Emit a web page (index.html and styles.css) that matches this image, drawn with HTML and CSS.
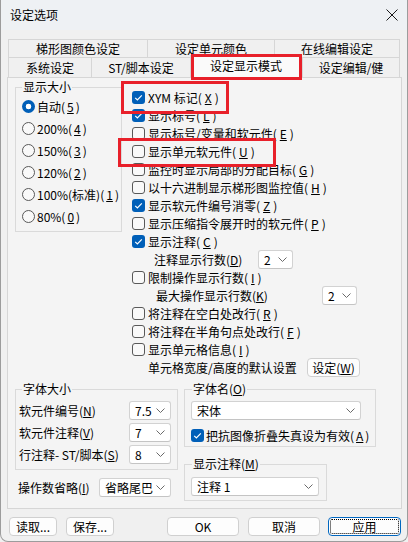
FILE: index.html
```html
<!DOCTYPE html>
<html lang="zh-CN">
<head>
<meta charset="utf-8">
<title>设定选项</title>
<link rel="stylesheet" href="styles.css">
</head>
<body>
<div class="win">
  <div class="titlebar">
    <span class="title">设定选项</span>
    <svg class="close" width="12" height="12" viewBox="0 0 12 12"><path d="M0.5 0.5 L11.5 11.5 M11.5 0.5 L0.5 11.5" stroke="#1a1a1a" stroke-width="1" fill="none"/></svg>
  </div>
  <div class="tabs">
    <div class="tabrow">
      <div class="tab t1">梯形图颜色设定</div>
      <div class="tab t2">设定单元颜色</div>
      <div class="tab t3 last">在线编辑设定</div>
    </div>
    <div class="tabrow front">
      <div class="tab t4">系统设定</div>
      <div class="tab t5">ST/脚本设定</div>
      <div class="tab t6 selected mark mark-tab">设定显示模式</div>
      <div class="tab t7 last">设定编辑/健</div>
    </div>
  </div>
  <div class="panel">
    <div class="top">
      <fieldset class="group size">
        <legend>显示大小</legend>
        <div class="radio on"><span class="rb"></span>自动(<u>5</u>)</div>
        <div class="radio"><span class="rb"></span>200%(<u>4</u>)</div>
        <div class="radio"><span class="rb"></span>150%(<u>3</u>)</div>
        <div class="radio"><span class="rb"></span>120%(<u>2</u>)</div>
        <div class="radio"><span class="rb"></span>100%(标准)(<u>1</u>)</div>
        <div class="radio"><span class="rb"></span>80%(<u>0</u>)</div>
      </fieldset>
      <div class="opts">
        <div class="row mark mark-xym"><span class="cb on"><svg width="13" height="13" viewBox="0 0 13 13"><path d="M3.2 6.8 L5.4 9 L9.8 4.4" fill="none" stroke="#fff" stroke-width="1.2"/></svg></span>XYM 标记(<u>X</u>)</div>
        <div class="row"><span class="cb on"><svg width="13" height="13" viewBox="0 0 13 13"><path d="M3.2 6.8 L5.4 9 L9.8 4.4" fill="none" stroke="#fff" stroke-width="1.2"/></svg></span>显示标号(<u>L</u>)</div>
        <div class="row"><span class="cb"></span>显示标号/变量和软元件(<u>E</u>)</div>
        <div class="row mark mark-unit"><span class="cb"></span>显示单元软元件(<u>U</u>)</div>
        <div class="row"><span class="cb"></span>监控时显示局部的分配目标(<u>G</u>)</div>
        <div class="row"><span class="cb"></span>以十六进制显示梯形图监控值(<u>H</u>)</div>
        <div class="row"><span class="cb on"><svg width="13" height="13" viewBox="0 0 13 13"><path d="M3.2 6.8 L5.4 9 L9.8 4.4" fill="none" stroke="#fff" stroke-width="1.2"/></svg></span>显示软元件编号消零(<u>Z</u>)</div>
        <div class="row"><span class="cb"></span>显示压缩指令展开时的软元件(<u>P</u>)</div>
        <div class="row"><span class="cb on"><svg width="13" height="13" viewBox="0 0 13 13"><path d="M3.2 6.8 L5.4 9 L9.8 4.4" fill="none" stroke="#fff" stroke-width="1.2"/></svg></span>显示注释(<u>C</u>)</div>
        <div class="row ind1"><span class="lbl lbl-d">注释显示行数(<u>D</u>)</span><span class="dd dd-s"><span>2</span><svg width="9" height="5" viewBox="0 0 9 5"><path d="M0.5 0.5 L4.5 4.5 L8.5 0.5" fill="none" stroke="#6a6a6a"/></svg></span></div>
        <div class="row"><span class="cb"></span>限制操作显示行数(<u>I</u>)</div>
        <div class="row ind2"><span class="lbl lbl-k">最大操作显示行数(<u>K</u>)</span><span class="dd dd-s"><span>2</span><svg width="9" height="5" viewBox="0 0 9 5"><path d="M0.5 0.5 L4.5 4.5 L8.5 0.5" fill="none" stroke="#6a6a6a"/></svg></span></div>
        <div class="row"><span class="cb"></span>将注释在空白处改行(<u>R</u>)</div>
        <div class="row"><span class="cb"></span>将注释在半角句点处改行(<u>F</u>)</div>
        <div class="row"><span class="cb"></span>显示单元格信息(<u>I</u>)</div>
        <div class="row ind3"><span class="lbl lbl-w">单元格宽度/高度的默认设置</span><button class="btn btn-set">设定(<u>W</u>)</button></div>
      </div>
    </div>
    <div class="bottom">
      <div class="bleft">
        <fieldset class="group fsize">
          <legend>字体大小</legend>
          <div class="frow"><span>软元件编号(<u>N</u>)</span><span class="dd dd-f"><span>7.5</span><svg width="9" height="5" viewBox="0 0 9 5"><path d="M0.5 0.5 L4.5 4.5 L8.5 0.5" fill="none" stroke="#6a6a6a"/></svg></span></div>
          <div class="frow"><span>软元件注释(<u>V</u>)</span><span class="dd dd-f"><span>7</span><svg width="9" height="5" viewBox="0 0 9 5"><path d="M0.5 0.5 L4.5 4.5 L8.5 0.5" fill="none" stroke="#6a6a6a"/></svg></span></div>
          <div class="frow"><span>行注释- ST/脚本(<u>S</u>)</span><span class="dd dd-f"><span>8</span><svg width="9" height="5" viewBox="0 0 9 5"><path d="M0.5 0.5 L4.5 4.5 L8.5 0.5" fill="none" stroke="#6a6a6a"/></svg></span></div>
        </fieldset>
        <div class="oprow"><span>操作数省略(<u>I</u>)</span><span class="dd dd-op"><span>省略尾巴</span><svg width="9" height="5" viewBox="0 0 9 5"><path d="M0.5 0.5 L4.5 4.5 L8.5 0.5" fill="none" stroke="#6a6a6a"/></svg></span></div>
      </div>
      <div class="bright">
        <fieldset class="group fname">
          <legend>字体名(<u>O</u>)</legend>
          <span class="dd dd-fn"><span>宋体</span><svg width="9" height="5" viewBox="0 0 9 5"><path d="M0.5 0.5 L4.5 4.5 L8.5 0.5" fill="none" stroke="#6a6a6a"/></svg></span>
          <div class="row arow"><span class="cb on"><svg width="13" height="13" viewBox="0 0 13 13"><path d="M3.2 6.8 L5.4 9 L9.8 4.4" fill="none" stroke="#fff" stroke-width="1.2"/></svg></span>把抗图像折叠失真设为有效(<u>A</u>)</div>
        </fieldset>
        <fieldset class="group fcom">
          <legend>显示注释(<u>M</u>)</legend>
          <span class="dd dd-cm"><span>注释 1</span><svg width="9" height="5" viewBox="0 0 9 5"><path d="M0.5 0.5 L4.5 4.5 L8.5 0.5" fill="none" stroke="#6a6a6a"/></svg></span>
        </fieldset>
      </div>
    </div>
  </div>
  <div class="buttons">
    <button class="btn b-read">读取...</button>
    <button class="btn b-save">保存...</button>
    <button class="btn b-ok">OK</button>
    <button class="btn b-cancel">取消</button>
    <button class="btn b-apply">应用</button>
  </div>
</div>
</body>
</html>
```
FILE: styles.css
```css
* { box-sizing: border-box; }
html, body { margin: 0; padding: 0; }
body {
  width: 408px;
  height: 542px;
  overflow: hidden;
  background: #f0f0f0;
  font-family: "Noto Sans CJK SC", "Noto Sans", sans-serif;
  font-size: 12px;
  color: #000;
}
u { text-underline-offset: 1px; }

.win {
  width: 408px;
  height: 542px;
  border: 1px solid #9c9c9c;
  border-top: none;
  border-radius: 0 0 8px 8px;
  background: #f0f0f0;
  display: flex;
  flex-direction: column;
  overflow: hidden;
}

.titlebar {
  height: 30px;
  flex: none;
  display: flex;
  align-items: center;
  justify-content: space-between;
  padding: 0 9px 0 9px;
  background: #eef1f4;
}
.title { line-height: 14px; }
.close { display: block; }

.tabs {
  margin: 9px 0 0 7px;
  display: flex;
  flex-direction: column;
  flex: none;
}
.tabrow { display: flex; height: 18px; }
.tabrow.front { height: 20px; }
.tab {
  border: 1px solid #d6d6d6;
  border-right: none;
  border-bottom: none;
  display: flex;
  align-items: center;
  justify-content: center;
  line-height: 14px;
  white-space: nowrap;
  background: #f0f0f0;
}
.tab.last { border-right: 1px solid #d6d6d6; }
.t1 { width: 139px; }
.t2 { width: 127px; }
.t3 { width: 126px; }
.t4 { width: 83px; }
.t5 { width: 99px; }
.t6 { width: 112px; }
.t7 { width: 98px; }
.selected {
  background: #fafafa;
  margin-top: -2px;
  height: 23px;
  z-index: 2;
  border-right: 1px solid #d6d6d6;
  padding-bottom: 2px;
}

.mark { position: relative; }
.mark::after {
  content: "";
  position: absolute;
  border: 3px solid #e8202a;
  pointer-events: none;
}
.mark-tab::after { left: 0; right: -1px; top: -2px; bottom: -2px; }
.mark-xym::after { left: -11px; top: -7px; width: 102px; height: 27px; }
.mark-unit::after { left: -14px; top: -4px; width: 152px; height: 23px; }

.panel {
  margin-left: 6px;
  width: 395px;
  height: 432px;
  flex: none;
  border: 1px solid #d6d6d6;
  background: #f4f4f4;
  padding: 0 0 0 7px;
}

.top { display: flex; align-items: flex-start; }

.group {
  margin: 0;
  border: 1px solid #dadada;
  min-width: 0;
}
.group legend {
  padding: 0 1px;
  line-height: 14px;
}

.size {
  margin-top: 2px;
  width: 107px;
  padding: 1px 0 4px 6px;
}
.radio {
  display: flex;
  align-items: center;
  height: 22px;
  gap: 2px;
  white-space: nowrap;
}
.rb {
  width: 13px;
  height: 13px;
  flex: none;
  border: 1px solid #595959;
  border-radius: 50%;
  background: #f9f9f9;
}
.radio.on .rb {
  border: none;
  background: radial-gradient(circle, #fff 0 2.6px, #005fb8 3.1px);
}

.opts { margin: 10px 0 0 10px; }
.row {
  display: flex;
  align-items: center;
  height: 18px;
  gap: 3px;
  white-space: nowrap;
}
.cb {
  width: 13px;
  height: 13px;
  flex: none;
  border: 1px solid #595959;
  border-radius: 3px;
  background: #f9f9f9;
}
.cb.on { border: none; background: #005fb8; }
.cb svg { display: block; }

.ind1 { padding-left: 22px; gap: 0; }
.ind2 { padding-left: 24px; gap: 0; }
.ind3 { padding-left: 16px; gap: 0; }
.lbl-d { width: 104px; }
.lbl-k { width: 166px; }
.lbl-w { width: 159px; }

.dd {
  display: flex;
  align-items: center;
  justify-content: space-between;
  height: 19px;
  flex: none;
  background: #fff;
  border: 1px solid #d2d2d2;
  border-bottom-color: #c4c4c4;
  border-radius: 3px;
  padding: 0 5px 0 5px;
  white-space: nowrap;
}
.dd svg { display: block; flex: none; }
.dd-s { width: 35px; }
.dd-f { width: 42px; }
.dd-op { width: 72px; }
.dd-fn { width: 170px; }
.dd-cm { width: 128px; }

.btn {
  height: 19px;
  padding: 0;
  margin: 0;
  border: 1px solid #d0d0d0;
  border-radius: 4px;
  background: #fdfdfd;
  font-family: inherit;
  font-size: 12px;
  color: #000;
  display: flex;
  align-items: center;
  justify-content: center;
  white-space: nowrap;
}
.btn-set { width: 53px; }

.bottom {
  display: flex;
  gap: 6px;
  margin-top: 6px;
}
.bleft { width: 163px; }
.fsize {
  width: 163px;
  padding: 3px 6px 4px 3px;
}
.fsize legend { margin-left: 3px; }
.frow {
  display: flex;
  align-items: center;
  justify-content: space-between;
  height: 22px;
  white-space: nowrap;
}
.oprow {
  display: flex;
  align-items: center;
  justify-content: space-between;
  height: 22px;
  margin-top: 6px;
  padding: 0 7px 0 3px;
  white-space: nowrap;
}

.bright { display: flex; flex-direction: column; align-items: flex-start; }
.fname {
  width: 192px;
  padding: 5px 0 2px 6px;
}
.fname legend { margin-left: 1px; }
.arow { margin-top: 6px; gap: 2px; }
.fcom {
  width: 143px;
  margin-top: 10px;
  padding: 6px 0 4px 6px;
}
.fcom legend { margin-left: 1px; }

.buttons {
  display: flex;
  margin-top: 8px;
  padding: 0 6px 0 8px;
}
.b-read { width: 48px; }
.b-save { width: 48px; margin-left: 9px; }
.b-ok { width: 72px; margin-left: auto; }
.b-cancel { width: 72px; margin-left: 9px; }
.b-apply {
  width: 73px;
  margin-left: 8px;
  border-color: #0067c0;
  outline: 1px dotted #000;
  outline-offset: -3px;
}
```
